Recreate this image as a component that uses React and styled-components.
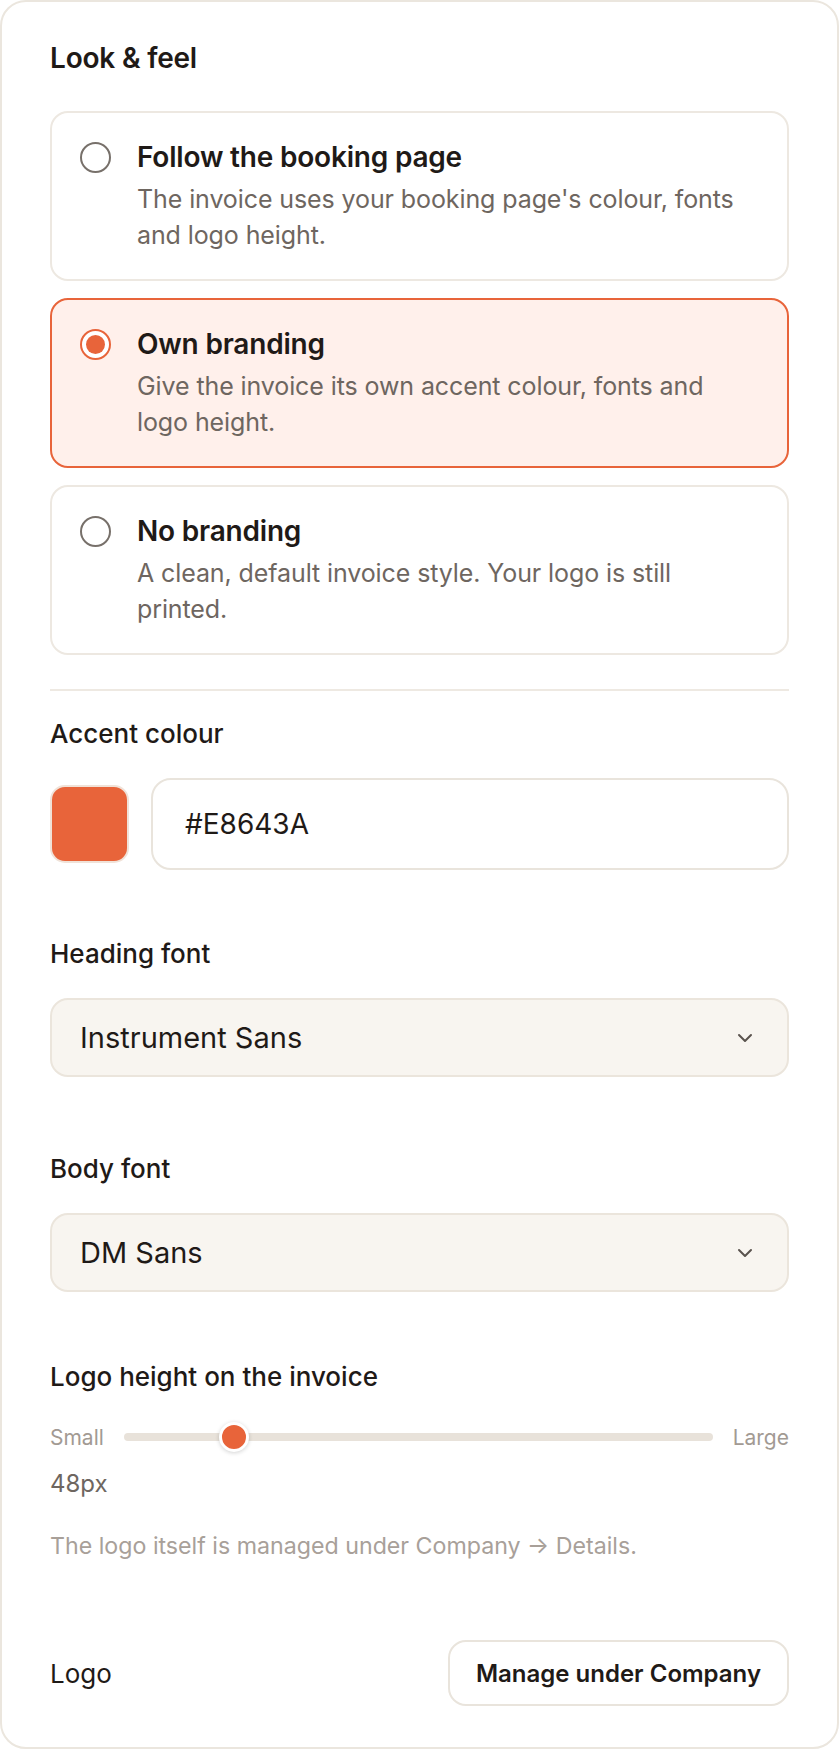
import React from "react";
import styled, { createGlobalStyle } from "styled-components";

const Global = createGlobalStyle`
  * { box-sizing: border-box; }
  body {
    margin: 0;
    background: #ffffff;
    font-family: Inter, "Liberation Sans", sans-serif;
    color: #1f1a17;
  }
`;

const ACCENT = "#E8643A";

const options = [
  {
    id: "booking",
    title: "Follow the booking page",
    desc: "The invoice uses your booking page's colour, fonts and logo height.",
  },
  {
    id: "own",
    title: "Own branding",
    desc: "Give the invoice its own accent colour, fonts and logo height.",
  },
  {
    id: "none",
    title: "No branding",
    desc: "A clean, default invoice style. Your logo is still printed.",
  },
];

function Chevron() {
  return (
    <svg width="16" height="10" viewBox="0 0 16 10" fill="none">
      <path d="M2 2l6 6 6-6" stroke="#5a534e" strokeWidth="2" strokeLinecap="round" strokeLinejoin="round" />
    </svg>
  );
}

export default function App() {
  const selected = "own";
  const logoPos = 18.7;

  return (
    <>
      <Global />
      <Panel>
        <Heading>Look &amp; feel</Heading>

        <OptionList>
          {options.map((o) => (
            <Option key={o.id} $active={o.id === selected}>
              <Radio $active={o.id === selected} />
              <OptionText>
                <OptionTitle>{o.title}</OptionTitle>
                <OptionDesc>{o.desc}</OptionDesc>
              </OptionText>
            </Option>
          ))}
        </OptionList>

        <Divider />

        <Label $top={27}>Accent colour</Label>
        <ColourRow>
          <Swatch $colour={ACCENT} />
          <TextInput>#E8643A</TextInput>
        </ColourRow>

        <Label $top={68}>Heading font</Label>
        <Select>
          <span>Instrument Sans</span>
          <Chevron />
        </Select>

        <Label $top={76}>Body font</Label>
        <Select>
          <span>DM Sans</span>
          <Chevron />
        </Select>

        <Label $top={69}>Logo height on the invoice</Label>
        <SliderRow>
          <SliderEnd>Small</SliderEnd>
          <Track>
            <Thumb style={{ left: `${logoPos}%` }} />
          </Track>
          <SliderEnd>Large</SliderEnd>
        </SliderRow>
        <Value>48px</Value>
        <Hint>The logo itself is managed under Company → Details.</Hint>

        <LogoRow>
          <LogoLabel>Logo</LogoLabel>
          <Button>Manage under Company</Button>
        </LogoRow>
      </Panel>
    </>
  );
}

const Panel = styled.div`
  width: 839px;
  min-height: 1749px;
  border: 2px solid #ebe6de;
  border-radius: 26px;
  padding: 40px 48px 37px;
  background: #fff;
`;

const Heading = styled.h2`
  margin: 0 0 37px;
  font-size: 28px;
  line-height: 32px;
  font-weight: 600;
  letter-spacing: -0.2px;
`;

const OptionList = styled.div`
  display: flex;
  flex-direction: column;
  gap: 17px;
`;

const Option = styled.div`
  display: flex;
  align-items: flex-start;
  gap: 26px;
  padding: 28px 28px 26px;
  border: 2px solid ${(p) => (p.$active ? ACCENT : "#ede8e1")};
  background: ${(p) => (p.$active ? "#fff0eb" : "#fff")};
  border-radius: 18px;
`;

const Radio = styled.span`
  flex: none;
  width: 31px;
  height: 31px;
  margin-top: 1px;
  border-radius: 50%;
  border: 2px solid ${(p) => (p.$active ? ACCENT : "#77706a")};
  background: #fff;
  position: relative;

  &::after {
    content: "";
    display: ${(p) => (p.$active ? "block" : "none")};
    position: absolute;
    inset: 4px;
    border-radius: 50%;
    background: ${ACCENT};
  }
`;

const OptionText = styled.div`
  display: flex;
  flex-direction: column;
  gap: 8px;
`;

const OptionTitle = styled.div`
  font-size: 28px;
  line-height: 32px;
  font-weight: 600;
  letter-spacing: -0.2px;
`;

const OptionDesc = styled.div`
  font-size: 25px;
  line-height: 36px;
  color: #6e6660;
  letter-spacing: -0.1px;
`;

const Divider = styled.hr`
  margin: 34px 0 0;
  border: none;
  height: 2px;
  background: #eee9e2;
`;

const Label = styled.div`
  margin-top: ${(p) => p.$top}px;
  margin-bottom: 28px;
  font-size: 26px;
  line-height: 32px;
  font-weight: 500;
`;

const ColourRow = styled.div`
  display: flex;
  align-items: center;
  gap: 22px;
`;

const Swatch = styled.div`
  flex: none;
  width: 79px;
  height: 78px;
  border-radius: 15px;
  border: 2px solid #f0e2d8;
  background: ${(p) => p.$colour};
`;

const TextInput = styled.div`
  flex: 1;
  height: 92px;
  display: flex;
  align-items: center;
  padding: 0 32px;
  border: 2px solid #e9e4dc;
  border-radius: 20px;
  font-size: 28px;
`;

const Select = styled.div`
  height: 79px;
  display: flex;
  align-items: center;
  justify-content: space-between;
  padding: 0 34px 0 28px;
  border: 2px solid #ebe5dc;
  border-radius: 18px;
  background: #f8f5f0;
  font-size: 29px;
`;

const SliderRow = styled.div`
  height: 32px;
  display: flex;
  align-items: center;
  gap: 20px;
`;

const SliderEnd = styled.span`
  font-size: 21px;
  color: #a29a93;
`;

const Track = styled.div`
  flex: 1;
  height: 8px;
  border-radius: 4px;
  background: #e8e2da;
  position: relative;
`;

const Thumb = styled.span`
  position: absolute;
  top: 50%;
  width: 30px;
  height: 30px;
  border-radius: 50%;
  background: ${ACCENT};
  border: 3px solid #fff;
  box-shadow: 0 1px 4px rgba(0, 0, 0, 0.18);
  transform: translate(-50%, -50%);
`;

const Value = styled.div`
  margin-top: 16px;
  font-size: 24px;
  line-height: 30px;
  color: #6e6660;
`;

const Hint = styled.div`
  margin-top: 32px;
  font-size: 23.2px;
  line-height: 30px;
  color: #a8a099;
`;

const LogoRow = styled.div`
  margin-top: 79px;
  display: flex;
  align-items: center;
  justify-content: space-between;
`;

const LogoLabel = styled.span`
  font-size: 26px;
`;

const Button = styled.button`
  height: 66px;
  padding: 0 26px;
  border: 2px solid #e9e4dc;
  border-radius: 18px;
  background: #fff;
  font-family: inherit;
  font-size: 24px;
  font-weight: 600;
  color: #1f1a17;
`;
